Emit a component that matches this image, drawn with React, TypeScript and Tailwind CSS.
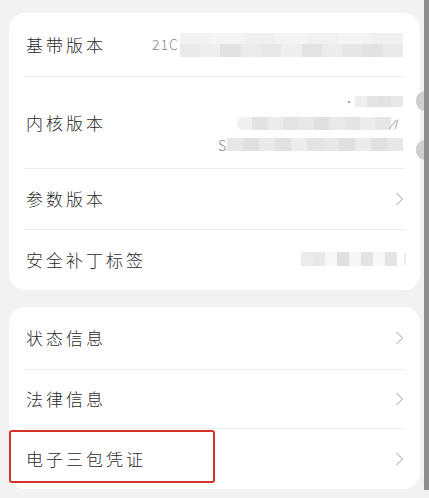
const rowText = "text-[17px] tracking-[3px] text-[#2a2a2a] font-light";

function Chevron() {
  return (
    <svg width="9" height="14" viewBox="0 0 9 14" className="shrink-0">
      <polyline points="1.5,1 7.5,7 1.5,13" fill="none" stroke="#c4c4c4" strokeWidth="1.2" />
    </svg>
  );
}

// pixelated blur strip, shades written out in full
function Blur({ shades, className }: { shades: string[]; className: string }) {
  return (
    <div className={"flex " + className}>
      {shades.map((s, i) => (
        <div key={i} className={"flex-1 " + s} />
      ))}
    </div>
  );
}

function Divider() {
  return <div className="mx-[15px] h-px bg-[#ececec]" />;
}

export default function App() {
  return (
    <div
      className="relative w-[429px] h-[498px] bg-[#f2f2f2] overflow-hidden"
      style={{ fontFamily: '"Noto Sans CJK SC", "Noto Sans", sans-serif' }}
    >
      <div className="pt-[13px] pl-[9px] w-[420px]">
        {/* card 1 */}
        <div className="bg-white rounded-[16px]">
          <div className="h-[63px] flex items-center px-[17px]">
            <span className={rowText}>基带版本</span>
            <span className="ml-[46px] text-[14px] text-[#8a8a8a] tracking-[1px] font-light">21C</span>
            <div className="ml-px flex-1 flex flex-col h-[24px]">
              <Blur
                className="h-[11px]"
                shades={["bg-[#f2f2f2]", "bg-[#f4f4f4]", "bg-[#f0f0f0]", "bg-[#f3f3f3]", "bg-[#f1f1f1]", "bg-[#f4f4f4]", "bg-[#f0f0f0]"]}
              />
              <Blur
                className="h-[13px]"
                shades={["bg-[#e9e9e9]", "bg-[#eeeeee]", "bg-[#e2e2e2]", "bg-[#ebebeb]", "bg-[#e8e8e8]", "bg-[#eeeeee]", "bg-[#e3e3e3]", "bg-[#ececec]", "bg-[#e6e6e6]", "bg-[#e2e2e2]", "bg-[#eaeaea]"]}
              />
            </div>
          </div>
          <Divider />
          <div className="h-[91px] flex items-center px-[17px]">
            <span className={rowText}>内核版本</span>
            <div className="flex-1 flex flex-col items-end gap-[8px]">
              <div className="flex items-center">
                <span className="text-[10px] text-[#9a9a9a] mr-px">·</span>
                <Blur className="w-[48px] h-[11px]" shades={["bg-[#eeeeee]", "bg-[#e4e4e4]", "bg-[#e2e2e2]", "bg-[#e8e8e8]"]} />
              </div>
              <div className="flex items-center pr-[6px]">
                <Blur
                  className="w-[154px] h-[13px] rounded-l-[6px] overflow-hidden"
                  shades={["bg-[#f0f0f0]", "bg-[#e2e2e2]", "bg-[#ebebeb]", "bg-[#e3e3e3]", "bg-[#e7e7e7]", "bg-[#e0e0e0]", "bg-[#e9e9e9]", "bg-[#e4e4e4]", "bg-[#ececec]", "bg-[#e6e6e6]"]}
                />
                <span className="text-[13px] leading-none text-[#8a8a8a] italic ml-px font-light">⁄I</span>
              </div>
              <div className="flex items-center">
                <span className="text-[14px] leading-none text-[#8a8a8a] mr-px font-light">S</span>
                <Blur
                  className="w-[176px] h-[13px]"
                  shades={["bg-[#e7e7e7]", "bg-[#e0e0e0]", "bg-[#eaeaea]", "bg-[#e1e1e1]", "bg-[#ededed]", "bg-[#e3e3e3]", "bg-[#e8e8e8]", "bg-[#dfdfdf]", "bg-[#ebebeb]", "bg-[#e1e1e1]", "bg-[#e7e7e7]"]}
                />
              </div>
            </div>
          </div>
          <Divider />
          <div className="h-[60px] flex items-center justify-between pl-[17px] pr-[16px]">
            <span className={rowText}>参数版本</span>
            <Chevron />
          </div>
          <Divider />
          <div className="h-[60px] flex items-center pl-[17px] pr-[14px]">
            <span className={rowText}>安全补丁标签</span>
            <div className="flex-1" />
            <Blur
              className="w-[96px] h-[14px] mt-[-3px]"
              shades={["bg-[#ebebeb]", "bg-[#e8e8e8]", "bg-[#f7f7f7]", "bg-[#e0e0e0]", "bg-[#f6f6f6]", "bg-[#e3e3e3]", "bg-[#f7f7f7]", "bg-[#e5e5e5]"]}
            />
            <div className="ml-[7px] w-[2px] h-[12px] bg-[#eeeeee] mt-[-3px]" />
          </div>
        </div>

        {/* card 2 */}
        <div className="relative mt-[17px] bg-white rounded-[16px]">
          <div className="h-[62px] flex items-center justify-between pl-[17px] pr-[16px]">
            <span className={rowText}>状态信息</span>
            <Chevron />
          </div>
          <Divider />
          <div className="h-[58px] flex items-center justify-between pl-[17px] pr-[16px]">
            <span className={rowText}>法律信息</span>
            <Chevron />
          </div>
          <Divider />
          <div className="h-[60px] flex items-center justify-between pl-[17px] pr-[16px]">
            <span className={rowText}>电子三包凭证</span>
            <Chevron />
          </div>
          <div className="absolute left-0 top-[123px] w-[206px] h-[53px] border-2 border-[#d3342b] rounded-[3px] pointer-events-none" />
        </div>
      </div>

      {/* overlays at the right edge */}
      <div className="absolute left-[416px] top-[91px] w-[9px] h-[20px] rounded-l-full bg-[#cfcfcf]" />
      <div className="absolute left-[416px] top-[140px] w-[9px] h-[20px] rounded-l-full bg-[#cfcfcf]" />
      <div className="absolute right-0 top-0 w-[5px] h-[490px] bg-[#8e8e8e]" />
    </div>
  );
}
